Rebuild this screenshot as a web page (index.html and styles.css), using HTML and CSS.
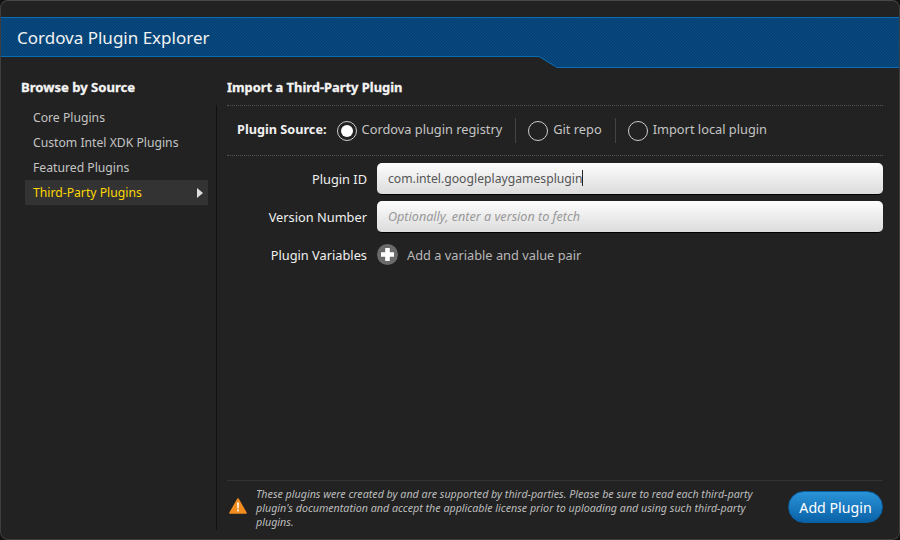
FILE: index.html
```html
<!DOCTYPE html>
<html lang="en">
<head>
    <meta charset="UTF-8">
    <title>Cordova Plugin Explorer</title>
    <link rel="stylesheet" href="styles.css">
</head>
<body>

    <div class="window">

        <!-- Title banner -->
        <div class="banner">
            <svg class="banner-bg" width="900" height="52" viewBox="0 0 900 52">
                <defs>
                    <pattern id="hatch" width="3" height="3" patternUnits="userSpaceOnUse">
                        <rect width="3" height="3" fill="#084a80"/>
                        <path d="M0 0h1v1H0zM1 1h1v1H1zM2 2h1v1H2z" fill="#033c6c"/>
                    </pattern>
                </defs>
                <path d="M0 .5H900V50.5H557L539 39.5H0z" fill="url(#hatch)" stroke="#0a6cb4"/>
            </svg>
            <h1>Cordova Plugin Explorer</h1>
        </div>

        <div class="content">

            <!-- Left menu -->
            <div class="sidebar">
                <h2>Browse by Source</h2>
                <ul class="menu">
                    <li>Core Plugins</li>
                    <li>Custom Intel XDK Plugins</li>
                    <li>Featured Plugins</li>
                    <li class="active">Third-Party Plugins<span class="arrow"></span></li>
                </ul>
            </div>

            <!-- Import form -->
            <div class="main">
                <h2 class="main-title">Import a Third-Party Plugin</h2>

                <div class="source-row">
                    <span class="source-label">Plugin Source:</span>
                    <span class="radio-item"><span class="radio checked"></span><span class="radio-text">Cordova plugin registry</span></span>
                    <span class="radio-item"><span class="radio"></span><span class="radio-text">Git repo</span></span>
                    <span class="radio-item"><span class="radio"></span><span class="radio-text">Import local plugin</span></span>
                </div>

                <div class="field">
                    <label>Plugin ID</label>
                    <div class="input">com.intel.googleplaygamesplugin<span class="caret"></span></div>
                </div>
                <div class="field">
                    <label>Version Number</label>
                    <div class="input placeholder">Optionally, enter a version to fetch</div>
                </div>
                <div class="field vars">
                    <label>Plugin Variables</label>
                    <svg class="add-icon" width="21" height="21" viewBox="0 0 21 21">
                        <circle cx="10.5" cy="10.5" r="10.5" fill="#6a6a6a"/>
                        <path d="M8.2 4h4.6v4.2H17v4.6h-4.2V17H8.2v-4.2H4V8.2h4.2z" fill="#fff"/>
                    </svg>
                    <span class="add-text">Add a variable and value pair</span>
                </div>

                <div class="footer">
                    <svg class="warn-icon" width="18" height="16" viewBox="0 0 18 16">
                        <path d="M9 1L17 15H1z" fill="#f28c1e" stroke="#f28c1e" stroke-width="1.6" stroke-linejoin="round"/>
                        <path d="M8.1 4.5h1.8l-.3 6H8.4z" fill="#fff"/>
                        <rect x="8.1" y="11.5" width="1.8" height="1.8" fill="#fff"/>
                    </svg>
                    <p class="notice">These plugins were created by and are supported by third-parties. Please be sure to read each third-party plugin's documentation and accept the applicable license prior to uploading and using such third-party plugins.</p>
                    <button class="add-btn">Add Plugin</button>
                </div>
            </div>
        </div>
    </div>

</body>
</html>
```

FILE: styles.css
```css
html, body {
    margin: 0;
    padding: 0;
    background-color: #111;
}

body {
    font-family: "Noto Sans", sans-serif;
    font-size: 12.8px;
    color: #c4c4c4;
}

.window {
    width: 900px;
    height: 540px;
    box-sizing: border-box;
    display: flex;
    flex-direction: column;
    background: #222;
    border: 1px solid #3e3e3e;
    border-top-color: #484848;
    border-radius: 8px;
    overflow: hidden;
}

.banner {
    position: relative;
    height: 40px;
    margin-top: 16px;
    flex: none;
}

.banner-bg {
    position: absolute;
    left: -1px;
    top: 0;
}

.banner h1 {
    position: relative;
    margin: 0;
    padding-left: 16px;
    font-size: 17px;
    font-weight: 400;
    line-height: 41px;
    color: #f2f2f2;
}

.content {
    flex: 1;
    display: flex;
    min-height: 0;
    padding-top: 20px;
}

.sidebar {
    width: 216px;
    box-sizing: border-box;
    flex: none;
    display: flex;
    flex-direction: column;
    padding-left: 20px;
    margin-bottom: 9px;
}

h2 {
    margin: 0;
    font-size: 13.1px;
    font-weight: 700;
    line-height: 20px;
    color: #f4f4f4;
    -webkit-text-stroke: 0.3px #f4f4f4;
}

.sidebar h2 {
    margin-bottom: 8px;
}

.menu {
    flex: 1;
    list-style-type: none;
    margin: 0;
    padding: 0 0 0 4px;
    border-right: 1px solid #111;
    font-size: 12.2px;
}

.menu li {
    position: relative;
    width: 175px;
    height: 25px;
    line-height: 25px;
    padding-left: 8px;
}

.menu li.active {
    background: #333;
    color: #ffd800;
}

.arrow {
    position: absolute;
    right: 5px;
    top: 8px;
    border-left: 6px solid #ddd;
    border-top: 5px solid transparent;
    border-bottom: 5px solid transparent;
}

.main {
    flex: 1;
    margin-left: 10px;
    margin-right: 16px;
    display: flex;
    flex-direction: column;
    min-width: 0;
}

.main-title {
    font-size: 12.9px;
    padding-bottom: 8px;
    border-bottom: 1px dotted #555;
}

.source-row {
    display: flex;
    align-items: center;
    height: 49px;
    margin-bottom: 1px;
    padding-left: 10px;
    border-bottom: 1px dotted #555;
}

.source-label {
    font-weight: 700;
    font-size: 12.7px;
    color: #f0f0f0;
    margin-right: 10px;
    position: relative;
    top: -2px;
}

.radio-item {
    display: flex;
    align-items: center;
    gap: 5px;
    height: 25px;
    padding-right: 13px;
    margin-right: 12px;
    border-right: 1px solid #444;
}

.radio-item:last-child {
    border-right: none;
}

.radio-text {
    position: relative;
    top: -2px;
}

.radio {
    width: 18px;
    height: 18px;
    border: 1px solid #ccc;
    border-radius: 50%;
    display: flex;
    align-items: center;
    justify-content: center;
}

.radio.checked::after {
    content: "";
    width: 12px;
    height: 12px;
    border-radius: 50%;
    background: #fff;
}

.field {
    display: flex;
    align-items: center;
    margin-top: 6px;
    height: 32px;
}

.field label {
    width: 140px;
    margin-right: 10px;
    flex: none;
    text-align: right;
    color: #f0f0f0;
}

.input {
    flex: 1;
    height: 32px;
    line-height: 31px;
    box-sizing: border-box;
    padding-left: 11px;
    border-radius: 5px;
    background: linear-gradient(#fdfdfd, #dcdcdc);
    border-bottom: 1px solid #000;
    font-size: 12.2px;
    color: #555;
}

.input.placeholder {
    font-style: italic;
    font-size: 12.6px;
    color: #999;
}

.caret {
    display: inline-block;
    width: 1px;
    height: 16px;
    background: #222;
    vertical-align: -3px;
}

.vars {
    height: 25px;
    margin-top: 9px;
}

.add-icon {
    flex: none;
}

.add-text {
    margin-left: 9px;
    color: #b8b8b8;
}

.footer {
    margin-top: auto;
    margin-bottom: 10px;
    display: flex;
    align-items: center;
    padding-top: 6px;
    border-top: 1px solid #333;
}

.warn-icon {
    flex: none;
    margin-left: 2px;
    margin-right: 9px;
    margin-bottom: 4px;
}

.notice {
    flex: 1;
    margin: 0;
    font-size: 10.7px;
    line-height: 14px;
    font-style: italic;
    color: #bcbcbc;
}

.add-btn {
    flex: none;
    width: 95px;
    height: 32px;
    margin-left: 16px;
    margin-bottom: 2px;
    border: 1px solid #0a5fa0;
    border-radius: 16px;
    background: linear-gradient(#2a93d8, #0a62a8);
    color: #fff;
    font-family: "Noto Sans", sans-serif;
    font-size: 14.2px;
    padding: 0;
}
```
